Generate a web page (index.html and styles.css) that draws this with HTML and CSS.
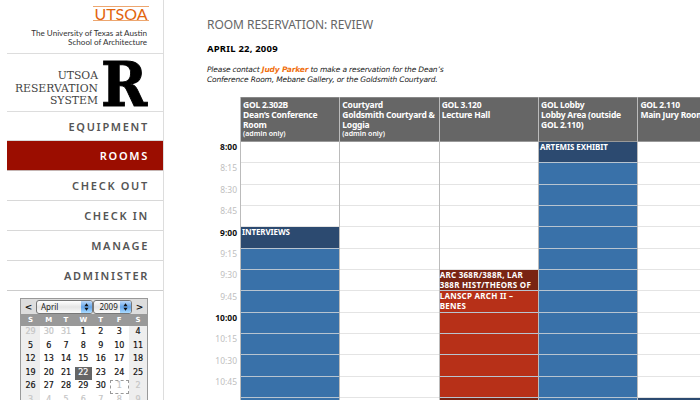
FILE: index.html
```html
<!DOCTYPE html>
<html lang="en">
<head>
<meta charset="utf-8">
<title>UTSOA Reservation System</title>
<link rel="stylesheet" href="styles.css">
</head>
<body>
<div class="page">
  <aside class="sidebar">
    <header class="brand">
      <div class="wordmark">UTSOA</div>
      <p class="tagline">The University of Texas at Austin<br>School of Architecture</p>
    </header>
    <div class="system">
      <div class="system-name">UTSOA<br>RESERVATION<br>SYSTEM</div>
      <div class="system-r">R</div>
    </div>
    <nav class="menu">
      <a>EQUIPMENT</a>
      <a class="active">ROOMS</a>
      <a>CHECK OUT</a>
      <a>CHECK IN</a>
      <a>MANAGE</a>
      <a>ADMINISTER</a>
    </nav>
    <div class="calendar">
      <div class="picker">
        <b class="arrow">&lt;</b>
        <span class="select month">April<svg viewBox="0 0 11 14"><path d="M5.5 2.6 7.9 6H3.1zM5.5 11.4 3.1 8h4.8z"/></svg></span>
        <span class="select year">2009<svg viewBox="0 0 11 14"><path d="M5.5 2.6 7.9 6H3.1zM5.5 11.4 3.1 8h4.8z"/></svg></span>
        <b class="arrow">&gt;</b>
      </div>
      <div class="week names"><b>S</b><b>M</b><b>T</b><b>W</b><b>T</b><b>F</b><b>S</b></div>
      <div class="week"><i class="out">29</i><i class="out">30</i><i class="out">31</i><i>1</i><i>2</i><i>3</i><i>4</i></div>
      <div class="week"><i>5</i><i>6</i><i>7</i><i>8</i><i>9</i><i>10</i><i>11</i></div>
      <div class="week"><i>12</i><i>13</i><i>14</i><i>15</i><i>16</i><i>17</i><i>18</i></div>
      <div class="week"><i>19</i><i>20</i><i>21</i><i class="selected">22</i><i>23</i><i>24</i><i>25</i></div>
      <div class="week"><i>26</i><i>27</i><i>28</i><i>29</i><i>30</i><i class="out today">1</i><i class="out">2</i></div>
      <div class="week"><i class="out">3</i><i class="out">4</i><i class="out">5</i><i class="out">6</i><i class="out">7</i><i class="out">8</i><i class="out">9</i></div>
    </div>
  </aside>
  <main class="content">
    <h1>ROOM RESERVATION: REVIEW</h1>
    <h2>APRIL 22, 2009</h2>
    <p class="note">Please contact <b>Judy Parker</b> to make a reservation for the Dean’s<br>Conference Room, Mebane Gallery, or the Goldsmith Courtyard.</p>
    <div class="schedule">
      <div class="times">
        <span class="hour">8:00</span><span>8:15</span><span>8:30</span><span>8:45</span>
        <span class="hour">9:00</span><span>9:15</span><span>9:30</span><span>9:45</span>
        <span class="hour">10:00</span><span>10:15</span><span>10:30</span><span>10:45</span>
      </div>
      <section class="room">
        <div class="head">GOL 2.302B<br>Dean’s Conference<br>Room<br><small>(admin only)</small></div>
        <div class="slot"></div><div class="slot"></div><div class="slot"></div><div class="slot"></div>
        <div class="slot navy">INTERVIEWS</div>
        <div class="slot blue"></div><div class="slot blue"></div><div class="slot blue"></div><div class="slot blue"></div><div class="slot blue"></div><div class="slot blue"></div><div class="slot blue"></div><div class="slot blue"></div>
      </section>
      <section class="room">
        <div class="head">Courtyard<br>Goldsmith Courtyard &amp;<br>Loggia<br><small>(admin only)</small></div>
        <div class="slot"></div><div class="slot"></div><div class="slot"></div><div class="slot"></div><div class="slot"></div><div class="slot"></div><div class="slot"></div><div class="slot"></div><div class="slot"></div><div class="slot"></div><div class="slot"></div><div class="slot"></div><div class="slot"></div>
      </section>
      <section class="room">
        <div class="head">GOL 3.120<br>Lecture Hall</div>
        <div class="slot"></div><div class="slot"></div><div class="slot"></div><div class="slot"></div><div class="slot"></div><div class="slot"></div>
        <div class="slot maroon">ARC 368R/388R, LAR<br>388R HIST/THEORS OF</div>
        <div class="slot red">LANSCP ARCH II –<br>BENES</div>
        <div class="slot red"></div><div class="slot red"></div><div class="slot red"></div><div class="slot red"></div><div class="slot maroon"></div>
      </section>
      <section class="room">
        <div class="head">GOL Lobby<br>Lobby Area (outside<br>GOL 2.110)</div>
        <div class="slot navy">ARTEMIS EXHIBIT</div>
        <div class="slot blue"></div><div class="slot blue"></div><div class="slot blue"></div><div class="slot blue"></div><div class="slot blue"></div><div class="slot blue"></div><div class="slot blue"></div><div class="slot blue"></div><div class="slot blue"></div><div class="slot blue"></div><div class="slot blue"></div><div class="slot blue"></div>
      </section>
      <section class="room">
        <div class="head">GOL 2.110<br>Main Jury Room</div>
        <div class="slot"></div><div class="slot"></div><div class="slot"></div><div class="slot"></div><div class="slot"></div><div class="slot"></div><div class="slot"></div><div class="slot"></div><div class="slot"></div><div class="slot"></div><div class="slot"></div><div class="slot"></div>
        <div class="slot navy"></div>
      </section>
    </div>
  </main>
</div>
</body>
</html>
```

FILE: styles.css
```css
* { box-sizing: border-box; }
body { margin: 0; background: #fff; color: #222; font-family: "Noto Sans", sans-serif; }
.page { display: flex; width: 700px; height: 400px; overflow: hidden; }

.sidebar { flex: none; width: 164px; height: 400px; padding-left: 7px; border-right: 1px solid #ddd; overflow: hidden; }
.brand { height: 54px; padding: 6px 16px 0 0; border-bottom: 1px solid #ddd; text-align: right; }
.wordmark { width: 56px; height: 15px; margin: 0 -2px 0 auto; border-top: 1px solid #eda66f; border-bottom: 1px solid #eda66f; color: #e2650e; font: 16px/13px Lato, sans-serif; text-align: center; white-space: nowrap; }
.tagline { margin: 8px 0 0; font: 8.1px/9px Lato, sans-serif; color: #333; white-space: nowrap; }

.system { display: flex; justify-content: flex-end; height: 58px; padding-right: 12px; border-bottom: 1px solid #ddd; }
.system-name { padding-top: 16px; text-align: right; font: 10.8px/12.5px "DejaVu Serif", serif; color: #444; white-space: nowrap; }
.system-r { width: 50px; margin-left: 3px; font: bold 61px/61px "DejaVu Serif", serif; color: #000; transform: scaleX(.91); transform-origin: 0 0; -webkit-text-stroke: 1px #000; }

.menu { margin-top: -1px; }
.menu a { display: block; height: 30px; padding-right: 14px; border-bottom: 1px solid #d8d8d8; text-align: right; font-size: 11px; font-weight: 600; line-height: 29px; letter-spacing: 1.7px; color: #555; }
.menu a:first-child { border-top: 1px solid #ddd; }
.menu a:last-child { border-bottom-color: #ccc; }
.menu .active { background: #9b0d00; color: #fff; border-color: #c5b5b3; }

.calendar { width: 128px; margin: 7px 0 0 13px; border: 1px solid #999; border-bottom: 0; font-family: "DejaVu Sans", sans-serif; }
.picker { display: flex; height: 15px; background: #ddd; align-items: center; }
.arrow { width: 15px; font-size: 9px; line-height: 14px; text-align: center; color: #111; }
.select { display: flex; justify-content: space-between; height: 14px; border: 1px solid #777; border-radius: 3px; background: linear-gradient(#fff, #e5e5e5 50%, #fafafa); font-family: "Noto Sans", sans-serif; font-size: 8px; line-height: 12px; padding-left: 4px; overflow: hidden; }
.select svg { width: 11px; height: 12px; background: linear-gradient(#bcd8f7, #64a5ea 50%, #a9dbff); fill: #111; }
.month { width: 58px; }
.year { width: 39px; padding-left: 5px; }
.week { display: grid; grid-template-columns: 19px 17.5px 17px 17.5px 17.5px 19.5px 1fr; height: 13.5px; text-align: center; font-size: 8px; line-height: 12.6px; color: #111; }
.week i { font-style: normal; -webkit-text-stroke: .2px currentColor; }
.week i:first-child, .week i:last-child { background: #eee; }
.week .out { color: #c5c5c5; }
.names { height: 12px; background: #999; color: #fff; font-size: 7px; line-height: 12px; }
.week .selected { background: #666; color: #fff; }
.week .today { border: 1px dashed #999; line-height: 10.6px; }

.content { flex: none; width: 536px; padding-left: 43px; }
h1 { margin: 17px 0 0; font-size: 12px; line-height: 16px; font-weight: 400; letter-spacing: -.05px; color: #666; }
h2 { margin: 8px 0 0; font-size: 9.5px; line-height: 16px; font-weight: 700; letter-spacing: .2px; color: #000; }
.note { margin: 8px 0 0; font: italic 7.5px/10px "DejaVu Sans", sans-serif; letter-spacing: -.16px; color: #222; white-space: nowrap; }
.note b { color: #f07010; }

.schedule { display: grid; grid-template-columns: 33px repeat(5, 99.35px); margin-top: 12px; }
.times { padding-top: 44px; }
.times span { display: block; height: 21.38px; padding-right: 3px; text-align: right; font-size: 8.5px; line-height: 11px; color: #c0c0c0; }
.times .hour { color: #111; font-weight: 700; }
.room { border-left: 1px solid #bbb; }
.head { height: 45px; padding: 2px 0 0 2px; background: #666; border-top: 1px solid #888; border-bottom: 1px solid #999; color: #fff; font-size: 8.5px; line-height: 10px; font-weight: 700; letter-spacing: -.23px; white-space: nowrap; }
.head small { display: block; font-size: 7px; line-height: 8px; font-weight: 600; letter-spacing: 0; }
.slot { height: 21.35px; border-bottom: 1px solid #e4e4e4; color: #fff; font-size: 8px; font-weight: 700; line-height: 10px; padding-left: 1px; letter-spacing: -.1px; white-space: nowrap; }
.blue, .navy, .red, .maroon { border-bottom-color: #b8c4d0; }
.blue { background: #3971a9; }
.navy { background: #2c4a70; }
.red { background: #b73018; }
.maroon { background: #792413; }
.red, .maroon { padding-left: 0; letter-spacing: .25px; }
```
